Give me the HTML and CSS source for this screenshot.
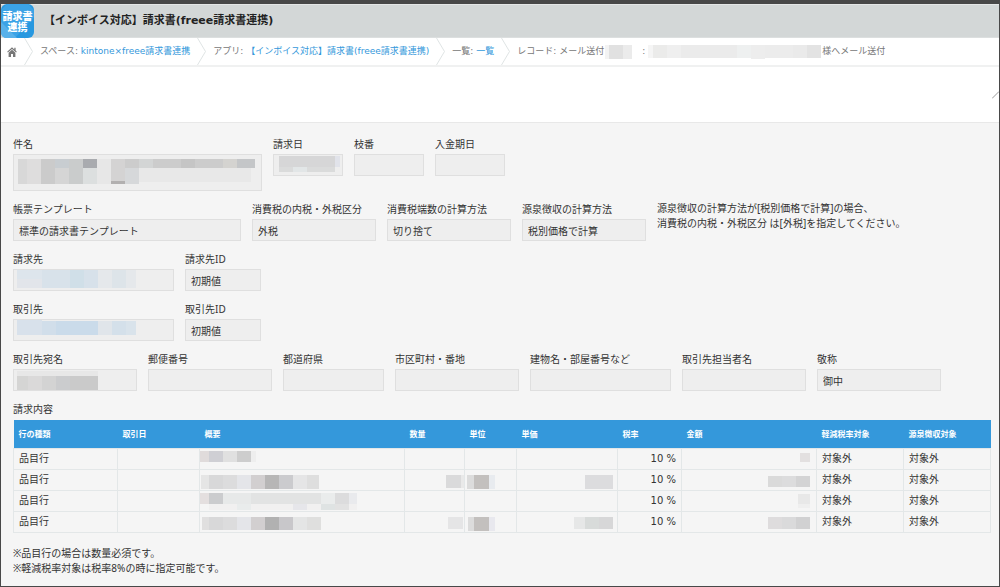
FILE: index.html
```html
<!DOCTYPE html>
<html lang="ja">
<head>
<meta charset="utf-8">
<title>【インボイス対応】請求書(freee請求書連携)</title>
<meta name="viewport" content="width=device-width, initial-scale=1">
<link rel="stylesheet" href="styles.css">
</head>
<body>
<div class="page">
  <header class="app-header">
    <div class="app-icon">
      <svg class="app-icon-shade" viewBox="0 0 33 34" aria-hidden="true"><rect width="33" height="34" rx="6" fill="#2798e0"/><path d="M6 0h21l6 6v7L14 34H6l-6-6V6z" fill="#3ba3e6"/><path d="M0 18v10q0 6 6 6h10z" fill="#58b1ea"/></svg>
      <div class="app-icon-text"><span>請求書</span><span>連携</span></div>
    </div>
    <h1 class="app-title">【インボイス対応】請求書(freee請求書連携)</h1>
  </header>

  <nav class="crumbs" aria-label="パンくず">
    <a class="home" href="#" aria-label="ホーム"><svg width="10" height="10" viewBox="0 0 10 10"><path d="M5 0.300 0.200 4.800l.7.8L5 1.900l4.100 3.700.7-.8L8.600 3.600V.8H7.300v1.600z" fill="#777"/><path d="M5 2.800 1.600 5.800V10H4V7h2v3h2.400V5.800z" fill="#777"/></svg></a>
    <svg class="chevron" viewBox="0 0 9 27"><path d="M.5 0l8 13.500-8 13.500" /></svg>
    <span>スペース: <a href="#">kintone×freee請求書連携</a></span>
    <svg class="chevron" viewBox="0 0 9 27"><path d="M.5 0l8 13.500-8 13.500" /></svg>
    <span>アプリ: <a href="#">【インボイス対応】請求書(freee請求書連携)</a></span>
    <svg class="chevron" viewBox="0 0 9 27"><path d="M.5 0l8 13.500-8 13.500" /></svg>
    <span>一覧: <a href="#">一覧</a></span>
    <svg class="chevron" viewBox="0 0 9 27"><path d="M.5 0l8 13.500-8 13.500" /></svg>
    <span class="record">レコード: メール送付
      <svg width="30" height="14"><path d="M1 0h4v14H1z" fill="#f3f3f3"/><path d="M5 0h14v14H5z" fill="#e1e1e1"/><path d="M19 0h9v14h-9z" fill="#ebebeb"/></svg>
      <span class="colon">:</span>
      <svg width="175" height="15"><path d="M1 1h5v13H1z" fill="#f5f5f5"/><path d="M6 1h14v13H6z" fill="#ebebea"/><path d="M20 1h14v13H20z" fill="#efefef"/><path d="M34 1h56v13H34z" fill="#ebebeb"/><path d="M90 1h14v13H90z" fill="#eef0f0"/><path d="M104 1h14v14h-14z" fill="#ededed"/><path d="M118 1h28v13h-28z" fill="#ececec"/><path d="M146 1h14v13h-14z" fill="#eaeaea"/><path d="M160 1h14v13h-14z" fill="#e3e3e3"/></svg>
      様へメール送付</span>
  </nav>

  <div class="toolbar"><svg width="7" height="8" viewBox="0 0 7 8"><path d="M0 7.500 7 .5" stroke="#999" fill="none"/></svg></div>

  <main class="content">
    <div class="row">
      <div class="field w-subject"><label for="subject">件名</label>
        <div class="box"><textarea id="subject" readonly></textarea>
          <svg class="mask" width="248" height="36"><path d="M5 5h9v25H5z" fill="#d8d8d8"/><path d="M14 5h14v25H14z" fill="#dedddd"/><path d="M28 5h14v25H28z" fill="#cbcbcb"/><path d="M42 5h14v9H42z" fill="#c8cdd1"/><path d="M42 14h14v16H42z" fill="#d5d5d5"/><path d="M56 5h14v25H56z" fill="#cacccc"/><path d="M70 5h14v9H70z" fill="#a9abaf"/><path d="M70 14h14v16H70z" fill="#dcdfdf"/><path d="M84 5h14v25H84z" fill="#e7e7e7"/><path d="M98 5h14v22H98z" fill="#d4d3d3"/><path d="M98 27h14v3H98z" fill="#b2b0b0"/><path d="M112 5h14v9h-14z" fill="#ccc"/><path d="M112 14h14v16h-14z" fill="#d6d8da"/><path d="M126 5h14v9h-14z" fill="#d3d5d5"/><path d="M140 5h28v9h-28z" fill="#ccc"/><path d="M168 5h14v9h-14z" fill="#c5c5c5"/><path d="M182 5h28v9h-28z" fill="#ccc"/><path d="M210 5h14v9h-14z" fill="#d4d3d0"/><path d="M224 5h18v9h-18z" fill="#c4c6c8"/><path d="M126 14h112v14H126z" fill="#e8e8e8"/></svg></div></div>
      <div class="field w-date"><label for="billdate">請求日</label>
        <div class="box"><input id="billdate" readonly>
          <svg class="mask" width="70" height="22"><path d="M6 2h56v11H6z" fill="#d6d6d7"/><path d="M6 13h14v5H6zM34 13h28v5H34z" fill="#dadbdb"/><path d="M20 13h14v5H20z" fill="#e2e6e7"/><path d="M62 2h5v11h-5z" fill="#e1e3ea"/></svg></div></div>
      <div class="field w-date"><label for="branch">枝番</label><input id="branch" readonly></div>
      <div class="field w-date"><label for="paydate">入金期日</label><input id="paydate" readonly></div>
    </div>

    <div class="row">
      <div class="field w-template"><label for="template">帳票テンプレート</label><input id="template" value="標準の請求書テンプレート" readonly></div>
      <div class="field w-std"><label for="taxtype">消費税の内税・外税区分</label><input id="taxtype" value="外税" readonly></div>
      <div class="field w-std"><label for="rounding">消費税端数の計算方法</label><input id="rounding" value="切り捨て" readonly></div>
      <div class="field w-std"><label for="withhold">源泉徴収の計算方法</label><input id="withhold" value="税別価格で計算" readonly></div>
      <p class="note">源泉徴収の計算方法が[税別価格で計算]の場合、<br>消費税の内税・外税区分 は[外税]を指定してください。</p>
    </div>

    <div class="row">
      <div class="field w-client"><label for="billto">請求先</label>
        <div class="box"><input id="billto" readonly>
          <svg class="mask" width="160" height="22"><path d="M4 1h25v9H4z" fill="#dde5ec"/><path d="M4 10h25v9H4z" fill="#e2e5ea"/><path d="M29 1h28v18H29z" fill="#d8e2ea"/><path d="M57 1h14v18H57z" fill="#d0dfe8"/><path d="M71 1h14v18H71z" fill="#d7e1ea"/><path d="M85 1h14v18H85z" fill="#e5e8eb"/><path d="M99 1h14v18H99z" fill="#dde4e9"/><path d="M113 1h10v18h-10z" fill="#e5e8eb"/></svg></div></div>
      <div class="field w-id"><label for="billid">請求先ID</label><input id="billid" value="初期値" readonly></div>
    </div>

    <div class="row">
      <div class="field w-client"><label for="partner">取引先</label>
        <div class="box"><input id="partner" readonly>
          <svg class="mask" width="160" height="22"><path d="M4 1h25v15H4z" fill="#d8e1eb"/><path d="M29 2h14v14H29z" fill="#d1deea"/><path d="M43 2h42v14H43z" fill="#cadbea"/><path d="M85 2h14v14H85z" fill="#e0e5ea"/><path d="M99 2h14v14H99z" fill="#d4e0ea"/><path d="M113 2h10v14h-10z" fill="#d9e3eb"/></svg></div></div>
      <div class="field w-id"><label for="partnerid">取引先ID</label><input id="partnerid" value="初期値" readonly></div>
    </div>

    <div class="row">
      <div class="field w-std"><label for="addressee">取引先宛名</label>
        <div class="box"><input id="addressee" readonly>
          <svg class="mask" width="124" height="22"><path d="M4 2h81v5H4z" fill="#e7e7e7"/><path d="M4 7h11v14H4z" fill="#d5d5d4"/><path d="M15 7h14v14H15z" fill="#dad9d9"/><path d="M29 7h14v14H29z" fill="#d3d3d3"/><path d="M43 7h14v14H43z" fill="#cbccce"/><path d="M57 7h28v14H57z" fill="#cacaca"/></svg></div></div>
      <div class="field w-std"><label for="zip">郵便番号</label><input id="zip" readonly></div>
      <div class="field w-pref"><label for="pref">都道府県</label><input id="pref" readonly></div>
      <div class="field w-std"><label for="city">市区町村・番地</label><input id="city" readonly></div>
      <div class="field w-bldg"><label for="bldg">建物名・部屋番号など</label><input id="bldg" readonly></div>
      <div class="field w-std"><label for="contact">取引先担当者名</label><input id="contact" readonly></div>
      <div class="field w-std"><label for="honorific">敬称</label><input id="honorific" value="御中" readonly></div>
    </div>

    <table class="items">
      <caption>請求内容</caption>
      <colgroup><col class="c-type"><col class="c-day"><col class="c-desc"><col class="c-qty"><col class="c-unit"><col class="c-price"><col class="c-rate"><col class="c-amount"><col class="c-flag"><col class="c-flag"></colgroup>
      <thead>
        <tr><th>行の種類</th><th>取引日</th><th>概要</th><th>数量</th><th>単位</th><th>単価</th><th>税率</th><th>金額</th><th>軽減税率対象</th><th>源泉徴収対象</th></tr>
      </thead>
      <tbody>
        <tr><td>品目行</td><td></td>
          <td class="masked"><svg width="60" height="20"><path d="M0 2h9v11H0z" fill="#e0dbdb"/><path d="M9 2h14v11H9z" fill="#cfcfd4"/><path d="M23 2h14v11H23z" fill="#e0e0e0"/><path d="M37 2h14v11H37z" fill="#cdcdcd"/><path d="M51 2h5v11h-5z" fill="#eee"/></svg></td>
          <td></td><td></td><td></td><td class="num">10 %</td>
          <td class="masked end"><svg width="16" height="20"><path d="M0 4h10v9H0z" fill="#e3e0e0"/></svg></td>
          <td>対象外</td><td>対象外</td></tr>
        <tr><td>品目行</td><td></td>
          <td class="masked"><svg width="122" height="20"><path d="M1 5h8v14H1z" fill="#e5e5e5"/><path d="M9 5h14v14H9z" fill="#d8d8d9"/><path d="M23 5h14v14H23z" fill="#dcdcdd"/><path d="M37 5h14v14H37z" fill="#e4e5e9"/><path d="M51 5h14v14H51z" fill="#d2cfd0"/><path d="M65 5h14v14H65z" fill="#b7b6b6"/><path d="M79 5h14v14H79z" fill="#cbcbce"/><path d="M93 5h14v14H93z" fill="#e5e5e6"/><path d="M107 5h12v14h-12z" fill="#dedede"/></svg></td>
          <td class="masked end"><svg width="18" height="20"><path d="M0 5h15v13H0z" fill="#dadadb"/><path d="M15 5h3v13h-3z" fill="#e9e9e9"/></svg></td>
          <td class="masked"><svg width="32" height="20"><path d="M2 5h7v14H2z" fill="#dcdcdc"/><path d="M9 5h15v14H9z" fill="#c3c0be"/><path d="M24 5h6v14h-6z" fill="#e8ebef"/></svg></td>
          <td class="masked end"><svg width="32" height="20"><path d="M0 5h28v14H0z" fill="#dcdcde"/></svg></td>
          <td class="num">10 %</td>
          <td class="masked end"><svg width="48" height="20"><path d="M0 6h14v11H0z" fill="#dadada"/><path d="M14 6h14v11H14z" fill="#dcdcdd"/><path d="M28 6h14v11H28z" fill="#d3d3d4"/></svg></td>
          <td>対象外</td><td>対象外</td></tr>
        <tr><td>品目行</td><td></td>
          <td class="masked"><svg width="160" height="20"><path d="M0 2h9v11H0z" fill="#e4dfdf"/><path d="M9 2h14v11H9z" fill="#cbccce"/><path d="M23 2h28v11H23z" fill="#e7e9e9"/><path d="M51 2h70v11H51z" fill="#e2e3e3"/><path d="M121 2h14v11h-14z" fill="#eaecec"/><path d="M135 2h14v11h-14z" fill="#dcdcdd"/><path d="M149 2h8v11h-8z" fill="#e9eaed"/><path d="M9 13h148v6H9z" fill="#f1f0f0"/><path d="M37 13h14v6H37z" fill="#e9ecec"/><path d="M93 13h14v6H93z" fill="#e6e6ea"/><path d="M121 13h14v6h-14z" fill="#dfe3e3"/><path d="M135 13h14v6h-14z" fill="#e2e2e2"/></svg></td>
          <td></td><td></td><td></td><td class="num">10 %</td>
          <td class="masked end"><svg width="18" height="20"><path d="M0 3h12v10H0z" fill="#e8e8e8"/><path d="M0 13h12v4H0z" fill="#efefef"/></svg></td>
          <td>対象外</td><td>対象外</td></tr>
        <tr><td>品目行</td><td></td>
          <td class="masked"><svg width="122" height="20"><path d="M2 5h7v13H2z" fill="#e0dfdf"/><path d="M9 5h14v13H9z" fill="#d8d8d9"/><path d="M23 5h14v13H23z" fill="#dcdcdd"/><path d="M37 5h14v13H37z" fill="#e4e5e9"/><path d="M51 5h14v13H51z" fill="#d2cfd0"/><path d="M65 5h14v13H65z" fill="#b1b1b1"/><path d="M79 5h14v13H79z" fill="#c8c7ca"/><path d="M93 5h14v13H93z" fill="#e4e5e5"/><path d="M107 5h14v13h-14z" fill="#dfdfde"/></svg></td>
          <td class="masked end"><svg width="16" height="20"><path d="M0 5h15v12H0z" fill="#e5e5e6"/></svg></td>
          <td class="masked"><svg width="32" height="20"><path d="M3 5h6v14H3z" fill="#dcdcdc"/><path d="M9 5h15v14H9z" fill="#c3c0be"/><path d="M24 5h6v14h-6z" fill="#e8e8ee"/></svg></td>
          <td class="masked end"><svg width="43" height="20"><path d="M0 5h11v12H0z" fill="#e6e7e7"/><path d="M11 5h14v12H11z" fill="#d8dbda"/><path d="M25 5h14v12H25z" fill="#d7d7d8"/></svg></td>
          <td class="num">10 %</td>
          <td class="masked end"><svg width="48" height="20"><path d="M0 5h14v12H0z" fill="#dedcdd"/><path d="M14 5h14v12H14z" fill="#dadadb"/><path d="M28 5h14v12H28z" fill="#d1d1d2"/></svg></td>
          <td>対象外</td><td>対象外</td></tr>
      </tbody>
    </table>

    <p class="footnote">※品目行の場合は数量必須です。<br>※軽減税率対象は税率8%の時に指定可能です。</p>
  </main>
</div>
</body>
</html>
```
FILE: styles.css
```css
* { box-sizing: border-box; }

body {
  margin: 0;
  color: #333;
  font-family: "Noto Sans", "Noto Sans CJK JP", sans-serif;
  font-size: 10px;
  line-height: 15px;
}

.page {
  display: flex;
  flex-direction: column;
  min-height: 100vh;
  border: 1px solid #484848;
  border-top-width: 4px;
  background: #f5f5f5;
}

h1, p { margin: 0; }
a { color: #3498db; text-decoration: none; }

.app-header {
  display: flex;
  align-items: center;
  gap: 10px;
  height: 34px;
  border-top: 1px solid #e4e6e6;
  border-bottom: 1px solid #dcdfdf;
  background: #d3d7d7;
}
.app-icon {
  display: grid;
  place-items: center;
  width: 33px;
  height: 34px;
}
.app-icon-shade, .app-icon-text { grid-area: 1 / 1; }
.app-icon-text {
  display: flex;
  flex-direction: column;
  align-items: center;
  color: #fff;
  font-family: "Noto Sans CJK JP", sans-serif;
  font-size: 10px;
  font-weight: 900;
  line-height: 11px;
}
.app-title {
  color: #222;
  font-family: "DejaVu Sans", "Noto Sans CJK JP", sans-serif;
  font-size: 11px;
  font-weight: 700;
  line-height: 16px;
}

.crumbs {
  display: flex;
  align-items: center;
  gap: 7px;
  height: 29px;
  padding-left: 6px;
  border-bottom: 2px solid #f0f1f1;
  background: #fff;
  color: #777;
  font-family: "DejaVu Sans", "Noto Sans CJK JP", sans-serif;
  font-size: 9px;
  white-space: nowrap;
}
.home { display: flex; }
.chevron {
  width: 9px;
  height: 27px;
  fill: none;
  stroke: #dfe4e5;
}
.record { display: flex; align-items: center; }
.colon { padding: 0 2px 0 8px; }

.toolbar {
  display: flex;
  align-items: center;
  justify-content: flex-end;
  height: 56px;
  border-bottom: 1px solid #e8e8e8;
  background: #fff;
}

.content {
  display: flex;
  flex-direction: column;
  gap: 10px;
  padding: 13px 10px 8px 12px;
}
.row { display: flex; gap: 11px; }
.field {
  display: flex;
  flex-direction: column;
  gap: 2px;
}
.field label { line-height: 16px; white-space: nowrap; }
.w-subject { width: 249px; }
.w-date { width: 70px; }
.w-template { width: 228px; }
.w-std { width: 124px; }
.w-client { width: 161px; }
.w-id { width: 76px; }
.w-pref { width: 101px; }
.w-bldg { width: 141px; }

input, textarea {
  display: block;
  width: 100%;
  height: 22px;
  margin: 0;
  padding: 0 5px;
  border: 1px solid #dfdfdf;
  border-radius: 0;
  outline: 0;
  background: #eee;
  color: #333;
  font: inherit;
}
textarea { height: 37px; resize: none; }

.box { display: grid; }
.box > * { grid-area: 1 / 1; min-width: 0; }
.mask { pointer-events: none; }

.note { white-space: nowrap; }

.items {
  width: 100%;
  border-collapse: collapse;
  table-layout: fixed;
}
.items caption {
  padding-bottom: 3px;
  line-height: 16px;
  text-align: left;
}
.items th {
  height: 28px;
  padding: 0 5px;
  background: #3498db;
  color: #fff;
  font-size: 8px;
  font-weight: 700;
  text-align: left;
}
.items td {
  height: 21px;
  padding: 0 5px;
  border: 1px solid #e3e7e8;
}
.items .masked { padding: 0; }
.masked svg { display: block; }
.masked.end svg { margin-left: auto; }
.items .num {
  font-family: "DejaVu Sans", sans-serif;
  text-align: right;
}
.c-type { width: 104px; }
.c-day { width: 82px; }
.c-desc { width: 205px; }
.c-qty { width: 60px; }
.c-unit { width: 52px; }
.c-price { width: 101px; }
.c-rate { width: 64px; }
.c-amount { width: 135px; }
.c-flag { width: 87px; }

.footnote { padding-top: 3px; }
```
